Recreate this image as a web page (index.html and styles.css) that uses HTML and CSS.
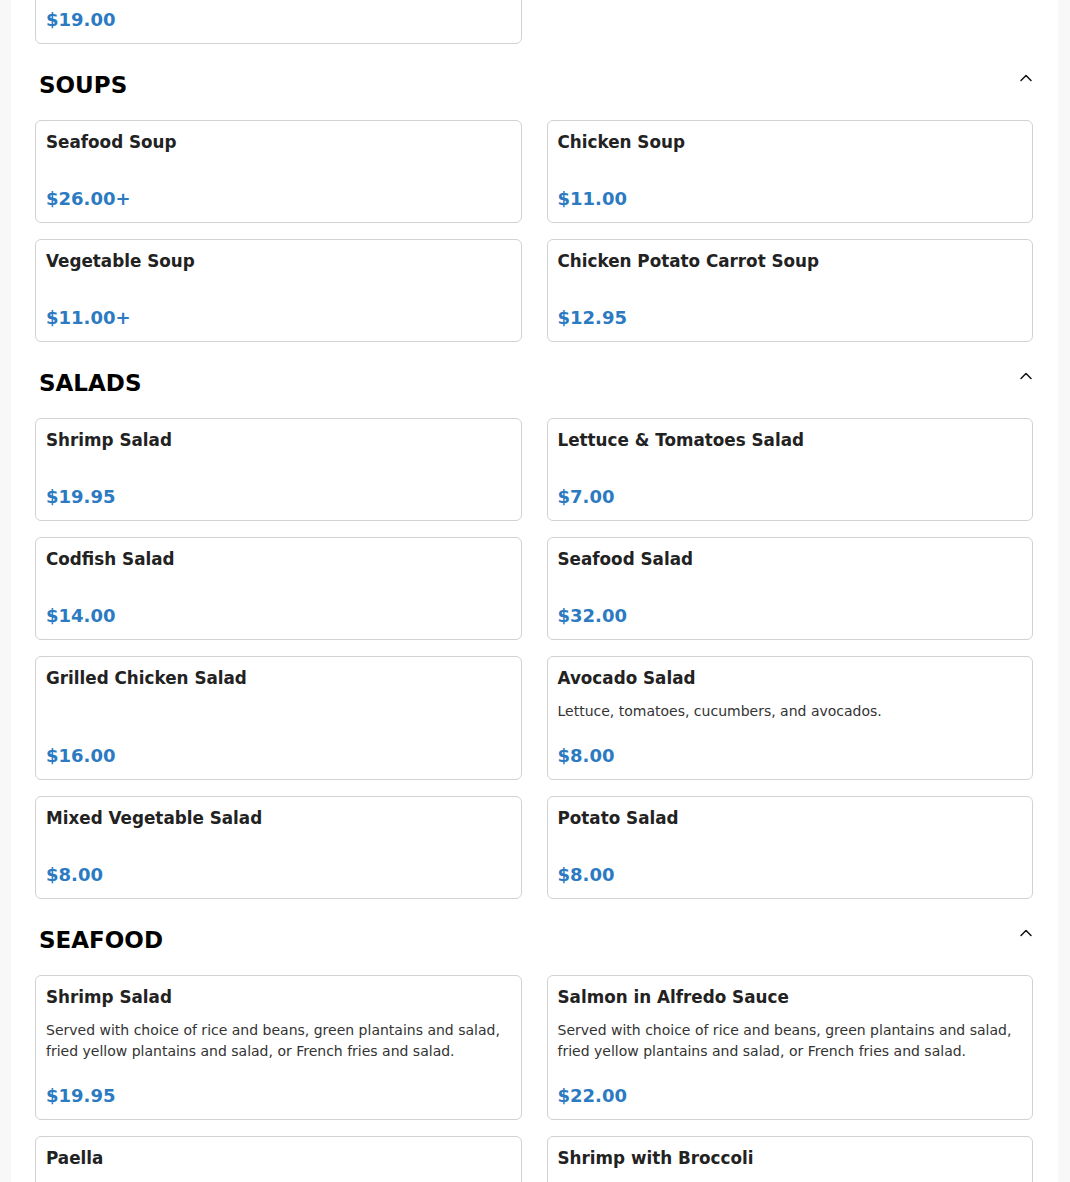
FILE: index.html
```html
<!DOCTYPE html>
<html lang="en">
<head>
<meta charset="utf-8">
<title>Menu</title>
<link rel="stylesheet" href="styles.css">
</head>
<body>
<main class="menu">
  <section class="section section-first">
    <div class="grid">
      <div class="card">
        <div class="card-title">Fried Fish</div>
        <div class="card-desc"></div>
        <div class="card-price">$19.00</div>
      </div>
    </div>
  </section>

  <section class="section">
    <div class="section-head">
      <h2 class="section-title">SOUPS</h2>
      <button class="toggle" aria-label="Collapse"><svg width="14" height="14" viewBox="0 0 14 14"><polyline points="2,9.5 7,4.5 12,9.5" fill="none" stroke="#111" stroke-width="1.5" stroke-linecap="round" stroke-linejoin="round"/></svg></button>
    </div>
    <div class="grid">
      <div class="card"><div class="card-title">Seafood Soup</div><div class="card-desc"></div><div class="card-price">$26.00+</div></div>
      <div class="card"><div class="card-title">Chicken Soup</div><div class="card-desc"></div><div class="card-price">$11.00</div></div>
      <div class="card"><div class="card-title">Vegetable Soup</div><div class="card-desc"></div><div class="card-price">$11.00+</div></div>
      <div class="card"><div class="card-title">Chicken Potato Carrot Soup</div><div class="card-desc"></div><div class="card-price">$12.95</div></div>
    </div>
  </section>

  <section class="section">
    <div class="section-head">
      <h2 class="section-title">SALADS</h2>
      <button class="toggle" aria-label="Collapse"><svg width="14" height="14" viewBox="0 0 14 14"><polyline points="2,9.5 7,4.5 12,9.5" fill="none" stroke="#111" stroke-width="1.5" stroke-linecap="round" stroke-linejoin="round"/></svg></button>
    </div>
    <div class="grid">
      <div class="card"><div class="card-title">Shrimp Salad</div><div class="card-desc"></div><div class="card-price">$19.95</div></div>
      <div class="card"><div class="card-title">Lettuce &amp; Tomatoes Salad</div><div class="card-desc"></div><div class="card-price">$7.00</div></div>
      <div class="card"><div class="card-title">Codfish Salad</div><div class="card-desc"></div><div class="card-price">$14.00</div></div>
      <div class="card"><div class="card-title">Seafood Salad</div><div class="card-desc"></div><div class="card-price">$32.00</div></div>
      <div class="card"><div class="card-title">Grilled Chicken Salad</div><div class="card-desc"></div><div class="card-price">$16.00</div></div>
      <div class="card"><div class="card-title">Avocado Salad</div><div class="card-desc">Lettuce, tomatoes, cucumbers, and avocados.</div><div class="card-price">$8.00</div></div>
      <div class="card"><div class="card-title">Mixed Vegetable Salad</div><div class="card-desc"></div><div class="card-price">$8.00</div></div>
      <div class="card"><div class="card-title">Potato Salad</div><div class="card-desc"></div><div class="card-price">$8.00</div></div>
    </div>
  </section>

  <section class="section">
    <div class="section-head">
      <h2 class="section-title">SEAFOOD</h2>
      <button class="toggle" aria-label="Collapse"><svg width="14" height="14" viewBox="0 0 14 14"><polyline points="2,9.5 7,4.5 12,9.5" fill="none" stroke="#111" stroke-width="1.5" stroke-linecap="round" stroke-linejoin="round"/></svg></button>
    </div>
    <div class="grid">
      <div class="card"><div class="card-title">Shrimp Salad</div><div class="card-desc">Served with choice of rice and beans, green plantains and salad, fried yellow plantains and salad, or French fries and salad.</div><div class="card-price">$19.95</div></div>
      <div class="card"><div class="card-title">Salmon in Alfredo Sauce</div><div class="card-desc">Served with choice of rice and beans, green plantains and salad, fried yellow plantains and salad, or French fries and salad.</div><div class="card-price">$22.00</div></div>
      <div class="card"><div class="card-title">Paella</div><div class="card-desc">Saffron rice cooked with shrimp, mussels, clams, calamari and chicken, served with a side salad.</div><div class="card-price">$38.00</div></div>
      <div class="card"><div class="card-title">Shrimp with Broccoli</div><div class="card-desc">Served with choice of rice and beans, green plantains and salad, fried yellow plantains and salad, or French fries and salad.</div><div class="card-price">$21.00</div></div>
    </div>
  </section>
</main>
</body>
</html>
```

FILE: styles.css
```css
html, body {
  margin: 0;
  padding: 0;
}

body {
  background: #f8f8f8;
  font-family: "DejaVu Sans", "Liberation Sans", sans-serif;
  color: #222;
}

.menu {
  background: #fff;
  margin: -59px 12px 0 11px;
  padding: 0 25px 40px 24px;
}

.section {
  margin-top: 27px;
}

.section-first {
  margin-top: 0;
}

.section-head {
  display: flex;
  justify-content: space-between;
  align-items: flex-start;
  padding: 0 0 0 4px;
  margin-bottom: 21px;
}

.section-title {
  margin: 0;
  font-size: 23px;
  line-height: 28px;
  font-weight: bold;
  color: #000;
  letter-spacing: 0;
}

.toggle {
  border: 0;
  background: none;
  padding: 0;
  margin: 0;
  width: 14px;
  height: 14px;
  display: block;
  cursor: pointer;
}

.toggle svg {
  display: block;
}

.grid {
  display: grid;
  grid-template-columns: 1fr 1fr;
  column-gap: 25px;
  row-gap: 16px;
}

.card {
  border: 1px solid #d2d2d2;
  border-radius: 6px;
  padding: 11px 10px 10px;
  display: flex;
  flex-direction: column;
}

.card-title {
  font-size: 16.8px;
  line-height: 20px;
  font-weight: bold;
  color: #222;
}

.card-desc {
  font-size: 14px;
  line-height: 21px;
  color: #333;
  margin: 13px 0 21px;
}

.card-price {
  margin-top: auto;
  font-size: 18px;
  line-height: 26px;
  font-weight: bold;
  color: #2b7ac2;
}
```
